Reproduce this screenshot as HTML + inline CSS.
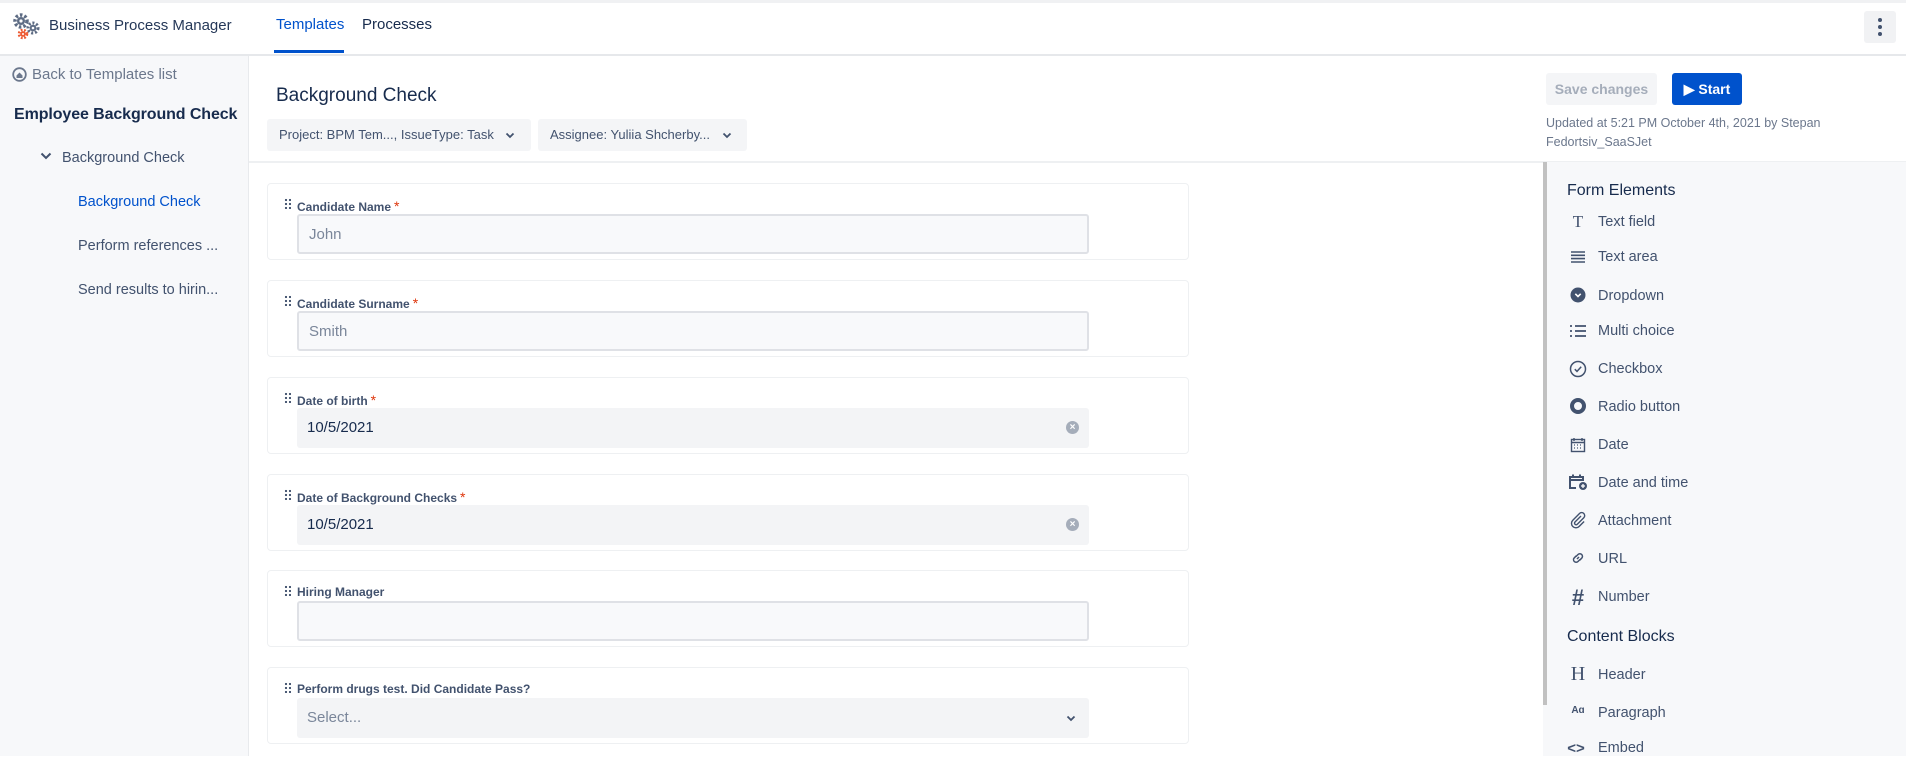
<!DOCTYPE html>
<html><head><meta charset="utf-8"><style>
*{box-sizing:border-box;margin:0;padding:0}
body{width:1906px;height:756px;overflow:hidden;background:#fff;font-family:"Liberation Sans",Arial,sans-serif;color:#172b4d;position:relative}
.abs{position:absolute}
.top{left:0;top:0;width:1906px;height:56px;border-top:3px solid #f0f1f3;border-bottom:2px solid #e6e8eb;background:#fff}
.side{left:0;top:56px;width:249px;height:700px;background:#f7f8fa;border-right:1px solid #e8eaed}
.card{left:267px;width:922px;height:77px;border:1px solid #eef0f2;border-radius:4px;background:#fff}
.lbl{position:absolute;left:29px;top:14px;font-size:12px;color:#42526e;font-weight:bold}
.lbl b{color:#de350b;font-weight:normal;font-size:14px;margin-left:3px}
.drag{position:absolute;left:16px;top:14px;width:7px;height:11px;background-image:radial-gradient(circle,#42526e 1px,transparent 1.3px);background-size:4px 4px}
.inp{position:absolute;left:29px;top:30px;width:792px;height:40px;border-radius:3px;font-size:15px;padding:0 10px;line-height:38px}
.inp.t{background:#f8f9fb;border:2px solid #dfe1e6;color:#7a869a}
.inp.d{background:#f3f4f6;color:#172b4d;line-height:40px}
.x{position:absolute;right:10px;top:13px;width:13px;height:13px;border-radius:50%;background:#a5adba;color:#fff;font-size:10px;line-height:13px;text-align:center;font-weight:bold}
.chip{top:119px;height:32px;background:#f4f5f7;border-radius:3px;font-size:13px;color:#42526e;padding:0 12px;line-height:32px;white-space:nowrap}
.chev{position:absolute;top:13px}
.panel{left:1543px;top:162px;width:363px;height:594px;background:#f7f8fa}
.item{position:absolute;left:1598px;font-size:14.5px;color:#42526e}
.ic{position:absolute;left:1567px;width:22px;text-align:center;color:#42526e}
.h{position:absolute;left:1567px;font-size:16px;color:#172b4d}
</style></head><body>
<div class="abs top"></div>
<svg class="abs" style="left:12px;top:12px" width="30" height="30" viewBox="0 0 30 30">
<circle cx="9" cy="9" r="6" fill="none" stroke="#5e6c84" stroke-width="3.5" stroke-dasharray="2.5 2"/><circle cx="9" cy="9" r="4" fill="#5e6c84"/><circle cx="9" cy="9" r="1.6" fill="#fff"/>
<circle cx="21" cy="16" r="5" fill="none" stroke="#5e6c84" stroke-width="3" stroke-dasharray="2 1.8"/><circle cx="21" cy="16" r="3.3" fill="#5e6c84"/><circle cx="21" cy="16" r="1.3" fill="#fff"/>
<circle cx="11" cy="22" r="4" fill="none" stroke="#ed5a33" stroke-width="2.6" stroke-dasharray="1.8 1.5"/><circle cx="11" cy="22" r="2.8" fill="#ed5a33"/><circle cx="11" cy="22" r="1" fill="#fff"/>
</svg>
<div class="abs" style="left:49px;top:17px;font-size:15px;color:#253858">Business Process Manager</div>
<div class="abs" style="left:276px;top:16px;font-size:15px;color:#0052cc">Templates</div>
<div class="abs" style="left:274px;top:50px;width:70px;height:3px;background:#0052cc"></div>
<div class="abs" style="left:362px;top:16px;font-size:15px;color:#172b4d">Processes</div>
<div class="abs" style="left:1864px;top:11px;width:32px;height:32px;background:#f1f2f4;border-radius:3px"></div>
<div class="abs" style="left:1878px;top:18px;width:4px;height:4px;border-radius:50%;background:#42526e;box-shadow:0 7px 0 #42526e,0 14px 0 #42526e"></div>

<div class="abs side"></div>
<svg class="abs" style="left:12px;top:67px" width="15" height="15"><circle cx="7.5" cy="7.5" r="6.3" fill="none" stroke="#6b778c" stroke-width="1.8"/><path d="M4.5 8.5L7.5 5.5l3 3v2.5h-6z" fill="#6b778c"/></svg>
<div class="abs" style="left:32px;top:66px;font-size:15px;color:#6b778c">Back to Templates list</div>
<div class="abs" style="left:14px;top:106px;font-size:16px;font-weight:bold;color:#172b4d;letter-spacing:-.1px">Employee Background Check</div>
<svg class="abs" style="left:40px;top:152px" width="12" height="8"><path d="M1.5 1.5l4.5 4.5 4.5-4.5" stroke="#42526e" stroke-width="2" fill="none"/></svg>
<div class="abs" style="left:62px;top:150px;font-size:14.5px;color:#42526e">Background Check</div>
<div class="abs" style="left:78px;top:194px;font-size:14.5px;color:#0052cc">Background Check</div>
<div class="abs" style="left:78px;top:238px;font-size:14.5px;color:#42526e">Perform references ...</div>
<div class="abs" style="left:78px;top:282px;font-size:14.5px;color:#42526e">Send results to hirin...</div>

<div class="abs" style="left:276px;top:85px;font-size:19px;color:#172b4d">Background Check</div>
<div class="abs chip" style="left:267px;width:264px">Project: BPM Tem..., IssueType: Task<svg class="chev" style="left:238px" width="10" height="7"><path d="M1.5 1.5l3.5 3.5 3.5-3.5" stroke="#42526e" stroke-width="1.8" fill="none"/></svg></div>
<div class="abs chip" style="left:538px;width:209px">Assignee: Yuliia Shcherby...<svg class="chev" style="left:184px" width="10" height="7"><path d="M1.5 1.5l3.5 3.5 3.5-3.5" stroke="#42526e" stroke-width="1.8" fill="none"/></svg></div>
<div class="abs" style="left:249px;top:161px;width:1657px;height:2px;background:#eef0f2"></div>

<div class="abs" style="left:1546px;top:73px;width:111px;height:32px;background:#f4f5f7;border-radius:3px;font-size:14px;color:#a5adba;text-align:center;line-height:32px;font-weight:bold">Save changes</div>
<div class="abs" style="left:1672px;top:73px;width:70px;height:32px;background:#0052cc;border-radius:3px;font-size:14px;color:#fff;text-align:center;line-height:32px;font-weight:bold">&#9654; Start</div>
<div class="abs" style="left:1546px;top:114px;font-size:12.5px;color:#6b778c;line-height:19px">Updated at 5:21 PM October 4th, 2021 by Stepan<br>Fedortsiv_SaaSJet</div>

<div class="abs card" style="top:183px"><div class="drag"></div><div class="lbl">Candidate Name<b>*</b></div><div class="inp t">John</div></div>
<div class="abs card" style="top:280px"><div class="drag"></div><div class="lbl">Candidate Surname<b>*</b></div><div class="inp t">Smith</div></div>
<div class="abs card" style="top:377px"><div class="drag"></div><div class="lbl">Date of birth<b>*</b></div><div class="inp d">10/5/2021<div class="x">×</div></div></div>
<div class="abs card" style="top:474px"><div class="drag"></div><div class="lbl">Date of Background Checks<b>*</b></div><div class="inp d">10/5/2021<div class="x">×</div></div></div>
<div class="abs card" style="top:570px"><div class="drag"></div><div class="lbl">Hiring Manager</div><div class="inp t"></div></div>
<div class="abs card" style="top:667px"><div class="drag"></div><div class="lbl">Perform drugs test. Did Candidate Pass?</div><div class="inp d" style="color:#7a869a">Select...<svg style="position:absolute;right:13px;top:17px" width="10" height="7"><path d="M1.5 1.5l3.5 3.5 3.5-3.5" stroke="#42526e" stroke-width="1.8" fill="none"/></svg></div></div>

<div class="abs panel"></div>
<div class="abs" style="left:1543px;top:162px;width:4px;height:543px;background:#c1c1c1"></div>
<div class="h" style="top:182px">Form Elements</div>
<div class="ic" style="top:212px;font-family:'Liberation Serif',serif;font-size:17px">T</div><div class="item" style="top:214px">Text field</div>
<div class="ic" style="top:250px"><svg width="16" height="12"><path d="M1 1h14M1 4.3h14M1 7.6h14M1 11h14" stroke="#42526e" stroke-width="1.6"/></svg></div><div class="item" style="top:249px">Text area</div>
<div class="ic" style="top:287px"><svg width="16" height="16"><circle cx="8" cy="8" r="7.5" fill="#42526e"/><path d="M5.3 6.8l2.7 2.7 2.7-2.7" stroke="#fff" stroke-width="1.6" fill="none"/></svg></div><div class="item" style="top:288px">Dropdown</div>
<div class="ic" style="top:324px"><svg width="18" height="14"><path d="M1 2h2M1 7h2M1 12h2M6 2h11M6 7h11M6 12h11" stroke="#42526e" stroke-width="1.8"/></svg></div><div class="item" style="top:323px">Multi choice</div>
<div class="ic" style="top:360px"><svg width="18" height="18"><circle cx="9" cy="9" r="7.5" fill="none" stroke="#42526e" stroke-width="1.5"/><path d="M5.8 9.2l2.2 2.2 4.2-4.6" stroke="#42526e" stroke-width="1.5" fill="none"/></svg></div><div class="item" style="top:361px">Checkbox</div>
<div class="ic" style="top:397px"><svg width="18" height="18"><circle cx="9" cy="9" r="6" fill="none" stroke="#42526e" stroke-width="4"/></svg></div><div class="item" style="top:399px">Radio button</div>
<div class="ic" style="top:437px"><svg width="16" height="16"><rect x="1.5" y="2.5" width="13" height="12" fill="none" stroke="#42526e" stroke-width="1.4"/><path d="M1.5 5.5h13M4 1v3M12 1v3" stroke="#42526e" stroke-width="1.4"/><path d="M4 8h1M7 8h1M10 8h1M4 11h1M7 11h1M10 11h1" stroke="#42526e" stroke-width="1.2"/></svg></div><div class="item" style="top:437px">Date</div>
<div class="ic" style="top:473px"><svg width="20" height="18"><path d="M8 15H2V4h13v4M2 7h13M5 1.5v3M12 1.5v3" stroke="#42526e" stroke-width="2" fill="none"/><circle cx="15" cy="13" r="4" fill="#42526e"/><path d="M15 11v4M13 13h4" stroke="#fff" stroke-width="1.3"/></svg></div><div class="item" style="top:475px">Date and time</div>
<div class="ic" style="top:511px"><svg width="18" height="18"><path d="M12 5l-6 6a1.6 1.6 0 0 0 2.3 2.3l6.5-6.5a3 3 0 0 0-4.3-4.3L3.8 9.2a4.4 4.4 0 0 0 6.3 6.3l5-5" stroke="#42526e" stroke-width="1.4" fill="none"/></svg></div><div class="item" style="top:513px">Attachment</div>
<div class="ic" style="top:549px"><svg width="18" height="18"><path d="M8 10l2-2M7 7.5L9 5.5a2.6 2.6 0 0 1 3.7 3.7l-2 2M11 10.5L9 12.5a2.6 2.6 0 0 1-3.7-3.7l2-2" stroke="#42526e" stroke-width="1.5" fill="none"/></svg></div><div class="item" style="top:551px">URL</div>
<div class="ic" style="top:585px;font-size:22px;font-weight:bold">#</div><div class="item" style="top:589px">Number</div>
<div class="h" style="top:628px">Content Blocks</div>
<div class="ic" style="top:663px;font-family:'Liberation Serif',serif;font-size:20px">H</div><div class="item" style="top:667px">Header</div>
<div class="ic" style="top:705px;font-size:10px;font-weight:bold">Aɑ</div><div class="item" style="top:705px">Paragraph</div>
<div class="ic" style="top:740px;font-size:15px;font-weight:bold;left:1565px">&lt;&gt;</div><div class="item" style="top:740px">Embed</div>
</body></html>
